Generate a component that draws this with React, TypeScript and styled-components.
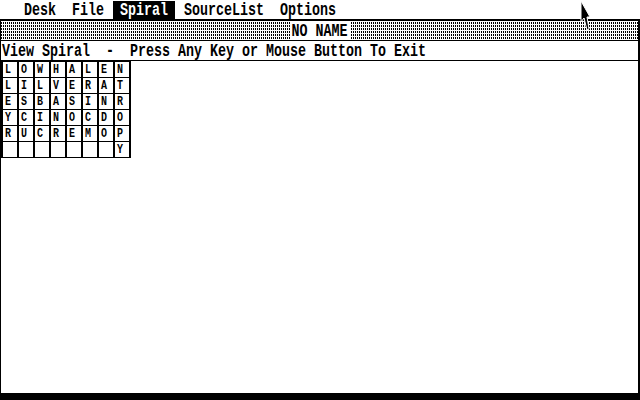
import React from "react";
import styled, { createGlobalStyle } from "styled-components";

const GlobalStyle = createGlobalStyle`
  html, body {
    margin: 0;
    padding: 0;
    background: #fff;
  }
  body {
    width: 640px;
    height: 400px;
    overflow: hidden;
    font-family: "Liberation Mono", "DejaVu Sans Mono", monospace;
  }
`;

const Screen = styled.div`
  position: relative;
  width: 640px;
  height: 400px;
  display: flex;
  flex-direction: column;
  background: #fff;
  color: #000;
`;

const MenuBar = styled.div`
  height: 19px;
  flex: none;
  border-bottom: 1px solid #000;
  display: flex;
  padding-left: 16px;
`;

const MenuTitle = styled.div<{ $active?: boolean }>`
  margin: 1px 1px 0;
  padding: 0 7px;
  height: 18px;
  display: flex;
  align-items: center;
  background: ${(p) => (p.$active ? "#000" : "transparent")};
  color: ${(p) => (p.$active ? "#fff" : "#000")};
`;

// 8x16 system font look: monospace, 8px advance, stretched tall
const Glyphs = styled.span`
  display: inline-block;
  font: bold 13.3333px/12px "Liberation Mono", monospace;
  transform: translateY(1px) scaleY(1.4);
  white-space: pre;
`;

const Window = styled.div`
  flex: 1;
  display: flex;
  flex-direction: column;
  border-top: 1px solid #000;
  border-left: 1px solid #000;
  border-right: 2px solid #000;
  border-bottom: 7px solid #000;
`;

const TitleBar = styled.div`
  height: 19px;
  flex: none;
  border-bottom: 1px solid #000;
  display: flex;
  align-items: center;
  justify-content: center;
  background-color: #fff;
  background-image: linear-gradient(to bottom, transparent 2px, #fff 2px),
    linear-gradient(to right, #000 1px, #fff 1px);
  background-size: 2px 3px;
  background-position: 0 1px;
`;

const TitleLabel = styled.div`
  height: 17px;
  padding: 0 2px;
  display: flex;
  align-items: center;
  background: #fff;
`;

const InfoBar = styled.div`
  height: 19px;
  flex: none;
  border-bottom: 1px solid #000;
  display: flex;
  align-items: center;
  padding-left: 1px;
`;

const WorkArea = styled.div`
  flex: 1;
  display: flex;
  align-items: flex-start;
`;

const WordGrid = styled.div`
  display: grid;
  grid-template-columns: repeat(8, 14px);
  grid-auto-rows: 15px;
  column-gap: 2px;
  row-gap: 1px;
  padding: 1px 2px;
  background: #000;
`;

const Cell = styled.div`
  background: #fff;
  padding: 3px 0 0 2px;
  font: bold 10px/8px "Liberation Mono", monospace;
`;

const CellGlyph = styled.span`
  display: inline-block;
  transform: translateY(1px) scaleY(1.3);
`;

const Pointer = styled.svg`
  position: absolute;
  left: 579px;
  top: 0;
`;

const menuItems = ["Desk", "File", "Spiral", "SourceList", "Options"];

const rows = [
  "LOWHALEN",
  "LILVERAT",
  "ESBASINR",
  "YCINOCDO",
  "RUCREMOP",
  "       Y",
];

export default function App() {
  return (
    <Screen>
      <GlobalStyle />
      <MenuBar>
        {menuItems.map((m) => (
          <MenuTitle key={m} $active={m === "Spiral"}>
            <Glyphs>{m}</Glyphs>
          </MenuTitle>
        ))}
      </MenuBar>
      <Window>
        <TitleBar>
          <TitleLabel>
            <Glyphs>NO NAME</Glyphs>
          </TitleLabel>
        </TitleBar>
        <InfoBar>
          <Glyphs>View Spiral  -  Press Any Key or Mouse Button To Exit</Glyphs>
        </InfoBar>
        <WorkArea>
          <WordGrid>
            {rows.flatMap((row, r) =>
              row.split("").map((ch, c) => (
                <Cell key={`${r}-${c}`}>
                  <CellGlyph>{ch.trim()}</CellGlyph>
                </Cell>
              ))
            )}
          </WordGrid>
        </WorkArea>
      </Window>
      <Pointer width="14" height="32" viewBox="0 0 14 32">
        <path
          d="M2 1 L2 22 L5 18 L8 30 L10 29 L8 17 L11 17 Z"
          fill="#000"
          stroke="#fff"
          strokeWidth="1"
        />
      </Pointer>
    </Screen>
  );
}
